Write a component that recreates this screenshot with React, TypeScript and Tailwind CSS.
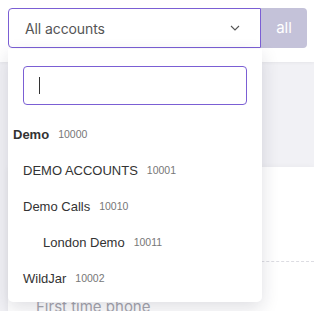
import { useState } from "react";

const ACCOUNTS = [
  { name: "Demo", id: "10000", depth: 0, bold: true },
  { name: "DEMO ACCOUNTS", id: "10001", depth: 1 },
  { name: "Demo Calls", id: "10010", depth: 1 },
  { name: "London Demo", id: "10011", depth: 2 },
  { name: "WildJar", id: "10002", depth: 1 },
];

const PAD = ["pl-[5px]", "pl-[15px]", "pl-[35px]"];

export default function App() {
  const [query, setQuery] = useState("");

  return (
    <div className="relative w-[314px] h-[311px] overflow-hidden bg-[#f1f1f5] font-['Inter','Liberation_Sans',sans-serif]">
      {/* Header */}
      <header className="h-[62px] bg-white shadow-[0_1px_3px_rgba(0,0,0,0.05)] pt-2 pl-2">
        <div className="flex h-10">
          <div className="w-[253px] flex items-center justify-between border border-[#7b5fd4] rounded-l-[4px] pl-4 pr-5 text-[14px] tracking-[-0.1px] text-[#555] bg-white">
            <span>All accounts</span>
            <svg width="10" height="6" viewBox="0 0 10 6" fill="none">
              <path d="M1 1l4 4 4-4" stroke="#555" strokeWidth="1.1" />
            </svg>
          </div>
          <button className="w-[46px] bg-[#c4c2d9] rounded-r-[4px] text-white text-[15px]">all</button>
        </div>
      </header>

      {/* Page body */}
      <div className="h-[105px]" />
      <div className="ml-2 bg-white h-[200px] shadow-[0_0_6px_rgba(0,0,0,0.04)]">
        <div className="h-[94px]" />
        <div className="border-t border-dashed border-[#dcdce2]" />
        <div className="pt-[34px] pl-7 text-[15px] text-[#a6a6ae]">First time phone</div>
      </div>

      {/* Dropdown */}
      <div className="absolute left-2 top-[49px] w-[254px] h-[253px] bg-white rounded-b-[5px] shadow-[0_6px_18px_rgba(30,30,60,0.14)] px-[15px] pt-[17px]">
        <div className="relative h-[39px] border border-[#7b5fd4] rounded-[4px]">
          <input
            value={query}
            onChange={(e) => setQuery(e.target.value)}
            className="w-full h-full outline-none bg-transparent px-4 text-[14px]"
          />
          <span className="absolute left-[15px] top-[10px] w-px h-[17px] bg-[#333]" />
        </div>
        <ul className="-mx-[15px] mt-3 font-['Liberation_Sans',Arial,sans-serif] text-[#333]">
          {ACCOUNTS.map((a) => (
            <li key={a.id} className={`h-9 flex items-center ${PAD[a.depth]}`}>
              <span className={a.bold ? "text-[13px] font-bold" : "text-[13px]"}>{a.name}</span>
              <span className="ml-[9px] text-[10.5px] text-[#777]">{a.id}</span>
            </li>
          ))}
        </ul>
      </div>
    </div>
  );
}
